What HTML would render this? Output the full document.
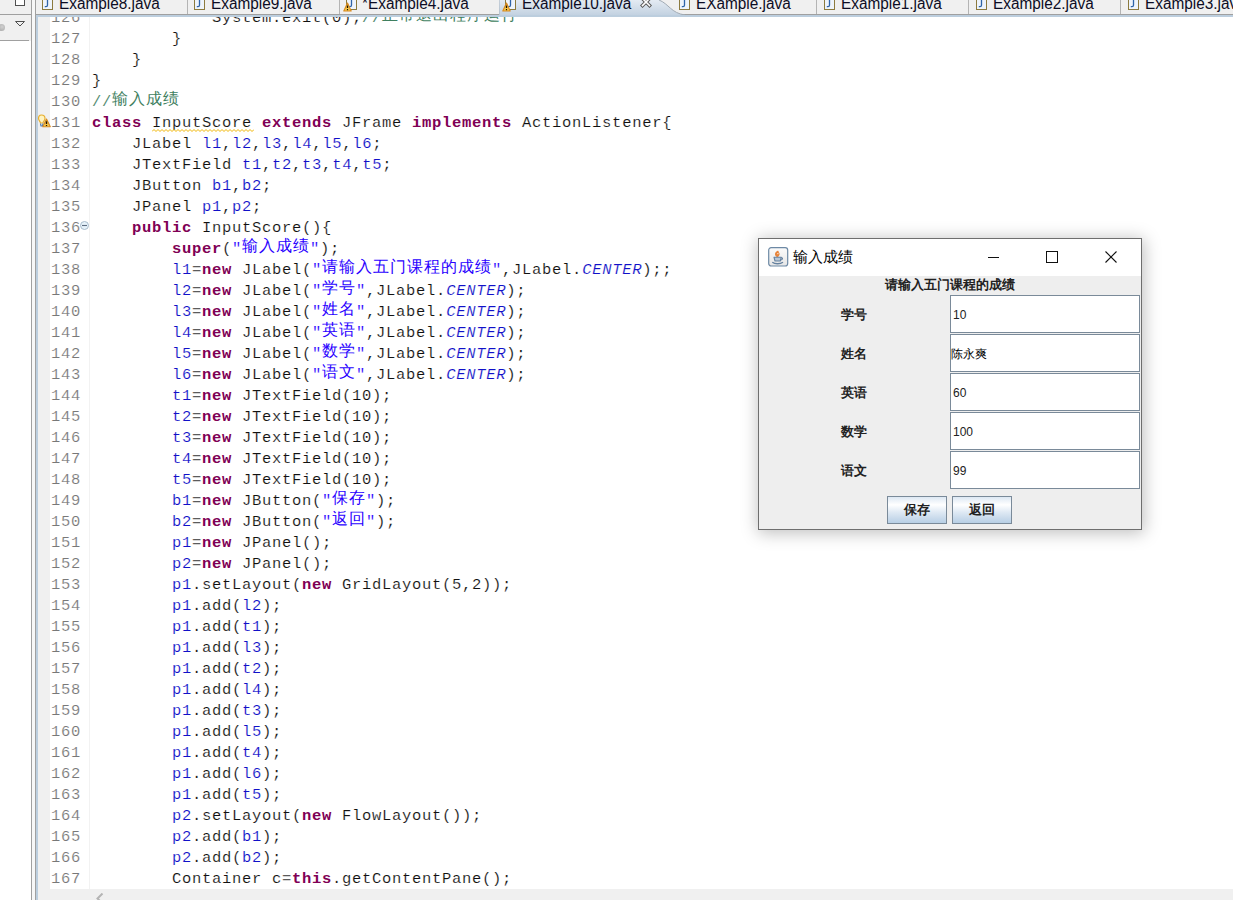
<!DOCTYPE html>
<html><head><meta charset="utf-8">
<style>
*{margin:0;padding:0;box-sizing:border-box}
html,body{width:1233px;height:900px;overflow:hidden;background:#f0f0f0;position:relative;font-family:"Liberation Sans",sans-serif}
.a{position:absolute}
#code,#nums{position:absolute;font-family:"Liberation Mono",monospace;font-size:15.5px;letter-spacing:0.7px;line-height:21px;white-space:pre;color:#111;-webkit-text-stroke:0.15px #fff}
#code{left:92px;top:-9px}
#nums{left:50px;top:-9px;color:#787878;width:31px;text-align:right}
#code>div,#nums>div{height:21px}
.k{color:#7f0055;font-weight:bold;-webkit-text-stroke:0}
.f{color:#1010c8}
.s{color:#2a00ff}
.c{color:#3f7f5f}
.i{color:#1010c8;font-style:italic}

.z{font-weight:300;-webkit-text-stroke:0;font-style:normal;display:inline-block;width:17px;line-height:10px;position:relative;top:-2px;font-family:"Liberation Sans",sans-serif;font-size:16px}
.tab{position:absolute;top:-5px;font-size:16px;line-height:17px;color:#0c0c24;white-space:pre;transform:scaleX(0.96);transform-origin:0 0}
.sep{position:absolute;top:0;width:1px;height:14px;background:#b4b4b4}
.ji{position:absolute;top:-1px;width:11px;height:11px;border:1px solid #8c7a3e;background:linear-gradient(#f4f8ff,#dde8f6)}
.ji:after{content:"";position:absolute;left:3px;top:-1px;width:3px;height:7px;border:2px solid #2f64a8;border-top:none;border-left:none;border-radius:0 0 3px 0}
.wt{position:absolute;width:0;height:0;border-left:4px solid transparent;border-right:4px solid transparent;border-bottom:8px solid #e8a630}
/* dialog */
#dlg{position:absolute;left:758px;top:238px;width:384px;height:292px;border:1px solid #6e6e6e;background:#eeeeee;box-shadow:1px 2px 16px 1px rgba(0,0,0,0.26)}
#dlg .tb{position:absolute;left:0;top:0;width:382px;height:37px;background:#fff}
.lab{position:absolute;font-size:13px;font-weight:bold;color:#222;line-height:14px;white-space:pre}
.fld{position:absolute;left:191px;width:190px;height:38px;background:#fff;border:1px solid #7a8a99}
.fld span{position:absolute;left:2px;top:12px;font-size:12px;line-height:14px;color:#222}
.fld span.nm{left:0;color:#000}
.btn{position:absolute;top:257px;width:60px;height:28px;border:1px solid #7a8a99;background:linear-gradient(#dde8f3 0%,#ffffff 30%,#dde8f3 60%,#b8cfe5 100%)}
.btn span{position:absolute;left:16px;top:6px;font-size:13px;font-weight:bold;color:#222;line-height:14px}
</style></head><body>
<!-- left panel -->
<div class="a" style="left:0;top:41px;width:31px;height:859px;background:#fff"></div>
<div class="a" style="left:0;top:14px;width:31px;height:1px;background:#a0a0a0"></div>
<div class="a" style="left:0;top:40px;width:29px;height:1px;background:#a0a0a0"></div>
<div class="a" style="left:15px;top:-5px;width:10px;height:11px;border:1px solid #505050;background:#fff"></div>
<svg class="a" style="left:14px;top:20px" width="12" height="8"><path d="M1.5 1.5 L10.5 1.5 L6 6 Z" fill="none" stroke="#505050" stroke-width="1"/></svg>
<div class="a" style="left:-2px;top:24px;width:7px;height:7px;border-radius:50%;background:radial-gradient(circle at 60% 40%,#d0d0d0,#a4a4a4)"></div>
<div class="a" style="left:31px;top:0;width:1px;height:900px;background:#a0a0a0"></div>
<div class="a" style="left:32px;top:0;width:3px;height:900px;background:#f7f7f7"></div>
<div class="a" style="left:35px;top:0;width:1px;height:900px;background:#a0a0a0"></div>
<!-- tab bar -->
<div class="a" style="left:36px;top:14px;width:1197px;height:1px;background:#a0a0a0"></div>
<div class="a" style="left:36px;top:15px;width:1197px;height:2px;background:#bccede"></div>
<svg class="a" style="left:499px;top:0" width="190" height="15"><defs><linearGradient id="tg" x1="0" y1="0" x2="0" y2="1"><stop offset="0" stop-color="#e4ebf3"/><stop offset="1" stop-color="#c3d2e1"/></linearGradient></defs><path d="M0 0 L160 0 C170 4,172 13,186 15 L0 15 Z" fill="url(#tg)"/><path d="M0 0 L0 15" stroke="#a8b4c0" stroke-width="1"/><path d="M160 0 C170 4,172 13,186 15" fill="none" stroke="#a0aab4" stroke-width="1"/></svg>
<div class="a" style="left:36px;top:15px;width:1197px;height:2px;background:#bccede"></div>
<svg class="a" style="left:42px;top:-1px" width="12" height="11"><rect x="0.5" y="0.5" width="10" height="10" fill="#eef4fc" stroke="#8c7a3e"/><path d="M5.5 0 L5.5 6.2 Q5.5 7.6 4 7.6 L2.8 7.6" fill="none" stroke="#2f64a8" stroke-width="1.3"/></svg>
<div class="tab" style="left:59px">Example8.java</div>
<svg class="a" style="left:194px;top:-1px" width="12" height="11"><rect x="0.5" y="0.5" width="10" height="10" fill="#eef4fc" stroke="#8c7a3e"/><path d="M5.5 0 L5.5 6.2 Q5.5 7.6 4 7.6 L2.8 7.6" fill="none" stroke="#2f64a8" stroke-width="1.3"/></svg>
<div class="tab" style="left:211px">Example9.java</div>
<svg class="a" style="left:346px;top:-1px" width="12" height="11"><rect x="0.5" y="0.5" width="10" height="10" fill="#eef4fc" stroke="#8c7a3e"/><path d="M5.5 0 L5.5 6.2 Q5.5 7.6 4 7.6 L2.8 7.6" fill="none" stroke="#2f64a8" stroke-width="1.3"/></svg>
<svg class="a" style="left:343px;top:2px" width="9" height="10"><path d="M4.5 1 L8.2 9 L0.8 9 Z" fill="#f5c84a" stroke="#d88a20" stroke-width="1.1" stroke-linejoin="round"/><path d="M4.5 3.5 L4.5 6" stroke="#201000" stroke-width="1.3"/><path d="M4.5 7 L4.5 8.2" stroke="#201000" stroke-width="1.2"/></svg>
<div class="tab" style="left:362px">*Example4.java</div>
<svg class="a" style="left:505px;top:-1px" width="12" height="11"><rect x="0.5" y="0.5" width="10" height="10" fill="#eef4fc" stroke="#8c7a3e"/><path d="M5.5 0 L5.5 6.2 Q5.5 7.6 4 7.6 L2.8 7.6" fill="none" stroke="#2f64a8" stroke-width="1.3"/></svg>
<svg class="a" style="left:502px;top:2px" width="9" height="10"><path d="M4.5 1 L8.2 9 L0.8 9 Z" fill="#f5c84a" stroke="#d88a20" stroke-width="1.1" stroke-linejoin="round"/><path d="M4.5 3.5 L4.5 6" stroke="#201000" stroke-width="1.3"/><path d="M4.5 7 L4.5 8.2" stroke="#201000" stroke-width="1.2"/></svg>
<div class="tab" style="left:522px">Example10.java</div>
<svg class="a" style="left:679px;top:-1px" width="12" height="11"><rect x="0.5" y="0.5" width="10" height="10" fill="#eef4fc" stroke="#8c7a3e"/><path d="M5.5 0 L5.5 6.2 Q5.5 7.6 4 7.6 L2.8 7.6" fill="none" stroke="#2f64a8" stroke-width="1.3"/></svg>
<div class="tab" style="left:696px">EXample.java</div>
<svg class="a" style="left:824px;top:-1px" width="12" height="11"><rect x="0.5" y="0.5" width="10" height="10" fill="#eef4fc" stroke="#8c7a3e"/><path d="M5.5 0 L5.5 6.2 Q5.5 7.6 4 7.6 L2.8 7.6" fill="none" stroke="#2f64a8" stroke-width="1.3"/></svg>
<div class="tab" style="left:841px">Example1.java</div>
<svg class="a" style="left:976px;top:-1px" width="12" height="11"><rect x="0.5" y="0.5" width="10" height="10" fill="#eef4fc" stroke="#8c7a3e"/><path d="M5.5 0 L5.5 6.2 Q5.5 7.6 4 7.6 L2.8 7.6" fill="none" stroke="#2f64a8" stroke-width="1.3"/></svg>
<div class="tab" style="left:993px">Example2.java</div>
<svg class="a" style="left:1128px;top:-1px" width="12" height="11"><rect x="0.5" y="0.5" width="10" height="10" fill="#eef4fc" stroke="#8c7a3e"/><path d="M5.5 0 L5.5 6.2 Q5.5 7.6 4 7.6 L2.8 7.6" fill="none" stroke="#2f64a8" stroke-width="1.3"/></svg>
<div class="tab" style="left:1145px">Example3.java</div>
<div class="sep" style="left:187px"></div>
<div class="sep" style="left:339px"></div>
<div class="sep" style="left:816px"></div>
<div class="sep" style="left:968px"></div>
<div class="sep" style="left:1120px"></div>
<svg class="a" style="left:640px;top:-3px" width="12" height="11"><path d="M2.5 1.5 L9.5 8.5 M9.5 1.5 L2.5 8.5" stroke="#5a5a5a" stroke-width="3.6" stroke-linecap="square"/><path d="M2.5 1.5 L9.5 8.5 M9.5 1.5 L2.5 8.5" stroke="#fff" stroke-width="1.6" stroke-linecap="square"/></svg>
<!-- editor -->
<div class="a" style="left:36px;top:17px;width:2px;height:883px;background:#bccede"></div>
<div class="a" style="left:38px;top:17px;width:12px;height:883px;background:#f0f0f0"></div>
<div class="a" style="left:50px;top:17px;width:1183px;height:872px;background:#fff"></div>
<div class="a" style="left:89px;top:17px;width:1px;height:872px;background:#f2f2f2"></div>
<div class="a" style="left:0;top:17px;width:1233px;height:872px;overflow:hidden"><div id="nums"><div>126</div><div>127</div><div>128</div><div>129</div><div>130</div><div>131</div><div>132</div><div>133</div><div>134</div><div>135</div><div>136</div><div>137</div><div>138</div><div>139</div><div>140</div><div>141</div><div>142</div><div>143</div><div>144</div><div>145</div><div>146</div><div>147</div><div>148</div><div>149</div><div>150</div><div>151</div><div>152</div><div>153</div><div>154</div><div>155</div><div>156</div><div>157</div><div>158</div><div>159</div><div>160</div><div>161</div><div>162</div><div>163</div><div>164</div><div>165</div><div>166</div><div>167</div></div>
<div id="code"><div>            System.exit(0);<span class="c">//<b class="z">正</b><b class="z">常</b><b class="z">退</b><b class="z">出</b><b class="z">程</b><b class="z">序</b><b class="z">运</b><b class="z">行</b></span></div><div>        }</div><div>    }</div><div>}</div><div><span class="c">//<b class="z">输</b><b class="z">入</b><b class="z">成</b><b class="z">绩</b></span></div><div><span class="k">class</span> <span class="w">InputScore</span> <span class="k">extends</span> JFrame <span class="k">implements</span> ActionListener{</div><div>    JLabel <span class="f">l1</span>,<span class="f">l2</span>,<span class="f">l3</span>,<span class="f">l4</span>,<span class="f">l5</span>,<span class="f">l6</span>;</div><div>    JTextField <span class="f">t1</span>,<span class="f">t2</span>,<span class="f">t3</span>,<span class="f">t4</span>,<span class="f">t5</span>;</div><div>    JButton <span class="f">b1</span>,<span class="f">b2</span>;</div><div>    JPanel <span class="f">p1</span>,<span class="f">p2</span>;</div><div>    <span class="k">public</span> InputScore(){</div><div>        <span class="k">super</span>(<span class="s">&quot;<b class="z">输</b><b class="z">入</b><b class="z">成</b><b class="z">绩</b>&quot;</span>);</div><div>        <span class="f">l1</span>=<span class="k">new</span> JLabel(<span class="s">&quot;<b class="z">请</b><b class="z">输</b><b class="z">入</b><b class="z">五</b><b class="z">门</b><b class="z">课</b><b class="z">程</b><b class="z">的</b><b class="z">成</b><b class="z">绩</b>&quot;</span>,JLabel.<span class="i">CENTER</span>);;</div><div>        <span class="f">l2</span>=<span class="k">new</span> JLabel(<span class="s">&quot;<b class="z">学</b><b class="z">号</b>&quot;</span>,JLabel.<span class="i">CENTER</span>);</div><div>        <span class="f">l3</span>=<span class="k">new</span> JLabel(<span class="s">&quot;<b class="z">姓</b><b class="z">名</b>&quot;</span>,JLabel.<span class="i">CENTER</span>);</div><div>        <span class="f">l4</span>=<span class="k">new</span> JLabel(<span class="s">&quot;<b class="z">英</b><b class="z">语</b>&quot;</span>,JLabel.<span class="i">CENTER</span>);</div><div>        <span class="f">l5</span>=<span class="k">new</span> JLabel(<span class="s">&quot;<b class="z">数</b><b class="z">学</b>&quot;</span>,JLabel.<span class="i">CENTER</span>);</div><div>        <span class="f">l6</span>=<span class="k">new</span> JLabel(<span class="s">&quot;<b class="z">语</b><b class="z">文</b>&quot;</span>,JLabel.<span class="i">CENTER</span>);</div><div>        <span class="f">t1</span>=<span class="k">new</span> JTextField(10);</div><div>        <span class="f">t2</span>=<span class="k">new</span> JTextField(10);</div><div>        <span class="f">t3</span>=<span class="k">new</span> JTextField(10);</div><div>        <span class="f">t4</span>=<span class="k">new</span> JTextField(10);</div><div>        <span class="f">t5</span>=<span class="k">new</span> JTextField(10);</div><div>        <span class="f">b1</span>=<span class="k">new</span> JButton(<span class="s">&quot;<b class="z">保</b><b class="z">存</b>&quot;</span>);</div><div>        <span class="f">b2</span>=<span class="k">new</span> JButton(<span class="s">&quot;<b class="z">返</b><b class="z">回</b>&quot;</span>);</div><div>        <span class="f">p1</span>=<span class="k">new</span> JPanel();</div><div>        <span class="f">p2</span>=<span class="k">new</span> JPanel();</div><div>        <span class="f">p1</span>.setLayout(<span class="k">new</span> GridLayout(5,2));</div><div>        <span class="f">p1</span>.add(<span class="f">l2</span>);</div><div>        <span class="f">p1</span>.add(<span class="f">t1</span>);</div><div>        <span class="f">p1</span>.add(<span class="f">l3</span>);</div><div>        <span class="f">p1</span>.add(<span class="f">t2</span>);</div><div>        <span class="f">p1</span>.add(<span class="f">l4</span>);</div><div>        <span class="f">p1</span>.add(<span class="f">t3</span>);</div><div>        <span class="f">p1</span>.add(<span class="f">l5</span>);</div><div>        <span class="f">p1</span>.add(<span class="f">t4</span>);</div><div>        <span class="f">p1</span>.add(<span class="f">l6</span>);</div><div>        <span class="f">p1</span>.add(<span class="f">t5</span>);</div><div>        <span class="f">p2</span>.setLayout(<span class="k">new</span> FlowLayout());</div><div>        <span class="f">p2</span>.add(<span class="f">b1</span>);</div><div>        <span class="f">p2</span>.add(<span class="f">b2</span>);</div><div>        Container c=<span class="k">this</span>.getContentPane();</div></div></div>
<svg class="a" style="left:152px;top:129px" width="102" height="4"><path d="M0 2.5 L2 0.5 L4 2.5 L6 0.5 L8 2.5 L10 0.5 L12 2.5 L14 0.5 L16 2.5 L18 0.5 L20 2.5 L22 0.5 L24 2.5 L26 0.5 L28 2.5 L30 0.5 L32 2.5 L34 0.5 L36 2.5 L38 0.5 L40 2.5 L42 0.5 L44 2.5 L46 0.5 L48 2.5 L50 0.5 L52 2.5 L54 0.5 L56 2.5 L58 0.5 L60 2.5 L62 0.5 L64 2.5 L66 0.5 L68 2.5 L70 0.5 L72 2.5 L74 0.5 L76 2.5 L78 0.5 L80 2.5 L82 0.5 L84 2.5 L86 0.5 L88 2.5 L90 0.5 L92 2.5 L94 0.5 L96 2.5 L98 0.5 L100 2.5 L102 0.5" fill="none" stroke="#f0b400" stroke-width="1"/></svg>
<!-- warning icon line 131 -->
<svg class="a" style="left:37px;top:113px" width="14" height="15">
<path d="M4.5 2 C2 2,1.5 4,1.5 5.5 C1.5 7.5,3.5 8.5,3.5 10 L6 10 C6 8.5,8 7.5,8 5.5 C8 4,7 2,4.5 2Z" fill="#fff3c0" stroke="#e8b030" stroke-width="1.2"/>
<path d="M3.5 10.5 L4 13 L5.5 13 L6 10.5" fill="none" stroke="#4a78b0" stroke-width="1.2"/>
<path d="M9.5 6 L13.3 13.8 L5.8 13.8 Z" fill="#f5c84a" stroke="#d88a20" stroke-width="1.1" stroke-linejoin="round"/>
<path d="M9.5 8.3 L9.5 11" stroke="#201000" stroke-width="1.4"/><path d="M9.5 12 L9.5 13" stroke="#201000" stroke-width="1.3"/>
</svg>
<!-- fold marker 136 -->
<svg class="a" style="left:80px;top:221px" width="9" height="9"><circle cx="4.5" cy="4.5" r="4" fill="#e6f2fa" stroke="#a9bccd" stroke-width="1"/><path d="M2 4.5 L7 4.5" stroke="#5c6c80" stroke-width="1.1"/></svg>
<!-- bottom scrollbar arrow -->
<svg class="a" style="left:95px;top:893px" width="10" height="8"><path d="M7.5 0.5 L2.5 5.5 L7.5 10.5" fill="none" stroke="#b4b4b4" stroke-width="2"/></svg>
<!-- dialog -->
<div id="dlg">
<div class="tb"></div>
<svg class="a" style="left:9px;top:8px" width="21" height="20"><defs><linearGradient id="jg" x1="0" y1="0" x2="0" y2="1"><stop offset="0" stop-color="#fbfbfb"/><stop offset="1" stop-color="#e6e6e6"/></linearGradient></defs><rect x="0.7" y="0.7" width="19" height="18.3" rx="2.5" fill="url(#jg)" stroke="#6d89a5" stroke-width="1.2"/><g transform="translate(-1.5,0)"><path d="M10.5 10 C7.8 9,8 6,10 4.5 C11 3.3,12.4 3.8,12.2 5.2 C13.8 6.2,13.2 8.5,11.5 10 Z" fill="#e8843a"/><circle cx="11.4" cy="6.6" r="0.6" fill="#fff"/><path d="M7.5 10.3 L14.8 10.3 L13.8 14 L8.5 14 Z" fill="#b7c6d6" stroke="#64819f" stroke-width="1.1" stroke-linejoin="round"/><path d="M14.6 10.8 C16.6 10.6,16.4 12.8,14.2 13" fill="none" stroke="#64819f" stroke-width="1.1"/><path d="M5.8 15.2 C8.5 17.3,13.5 17.3,16.5 15.2" fill="none" stroke="#64819f" stroke-width="1.4"/></g></svg>
<div class="a" style="left:34px;top:10px;font-size:15px;line-height:16px;color:#000">输入成绩</div>
<div class="a" style="left:229px;top:18px;width:11px;height:1px;background:#111"></div>
<div class="a" style="left:287px;top:12px;width:12px;height:12px;border:1px solid #111"></div>
<svg class="a" style="left:346px;top:12px" width="12" height="12"><path d="M0.5 0.5 L11.5 11.5 M11.5 0.5 L0.5 11.5" stroke="#111" stroke-width="1.1"/></svg>
<div class="lab" style="left:126px;top:39px">请输入五门课程的成绩</div>
<div class="lab" style="left:82px;top:69px">学号</div>
<div class="fld" style="top:56px"><span>10</span></div>
<div class="lab" style="left:82px;top:108px">姓名</div>
<div class="fld" style="top:95px"><span class="nm">陈永爽</span></div>
<div class="lab" style="left:82px;top:147px">英语</div>
<div class="fld" style="top:134px"><span>60</span></div>
<div class="lab" style="left:82px;top:186px">数学</div>
<div class="fld" style="top:173px"><span>100</span></div>
<div class="lab" style="left:82px;top:225px">语文</div>
<div class="fld" style="top:212px"><span>99</span></div>
<div class="btn" style="left:128px"><span>保存</span></div>
<div class="btn" style="left:193px"><span>返回</span></div>
</div>
</body></html>
